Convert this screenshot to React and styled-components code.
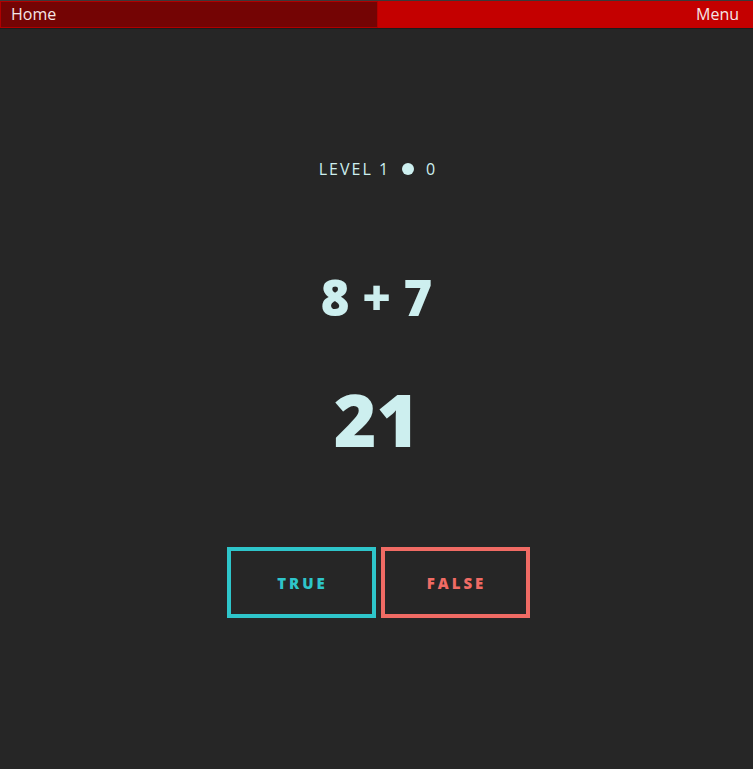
import styled, { createGlobalStyle } from 'styled-components';

const GlobalStyle = createGlobalStyle`
  html, body {
    margin: 0;
    padding: 0;
    background: #262626;
    font-family: "Open Sans", "Noto Sans", sans-serif;
  }
`;

export default function App() {
    return (
        <>
            <GlobalStyle />
            <Page>
                <TopBar>
                    <HomeLink>Home</HomeLink>
                    <MenuLink>Menu</MenuLink>
                </TopBar>
                <Game>
                    <Status>
                        <span>LEVEL 1</span>
                        <Dot />
                        <span>0</span>
                    </Status>
                    <Question>8 + 7</Question>
                    <Answer>21</Answer>
                    <Buttons>
                        <Choice color="#2ec5ca">TRUE</Choice>
                        <Choice color="#f06b64">FALSE</Choice>
                    </Buttons>
                </Game>
            </Page>
        </>
    );
}

const Page = styled.div`
min-height: 769px;
box-sizing: border-box;
border-top: 1px solid #3a3a3a;
`;

const TopBar = styled.header`
display: flex;
height: 27px;
background: #c40000;
border-bottom: 1px solid #1c1c1c;
font-size: 16px;
color: #f4e6e6;
`;

const HomeLink = styled.a`
width: 378px;
box-sizing: border-box;
background: #740404;
border: 1px solid #b00000;
padding: 0 10px;
line-height: 25px;
`;

const MenuLink = styled.a`
margin-left: auto;
padding: 0 14px;
line-height: 27px;
`;

const Game = styled.main`
display: flex;
flex-direction: column;
align-items: center;
color: #cdefef;
padding-top: 130px;
`;

const Status = styled.div`
display: flex;
align-items: center;
gap: 12px;
font-size: 16px;
letter-spacing: 2px;
height: 20px;
padding-left: 3px;
`;

const Dot = styled.span`
width: 12px;
height: 12px;
border-radius: 50%;
background: #cdefef;
`;

const Question = styled.div`
margin-top: 82px;
font-size: 49px;
font-weight: 800;
line-height: 72px;
`;

const Answer = styled.div`
margin-top: 36px;
font-size: 73px;
font-weight: 800;
line-height: 100px;
`;

const Buttons = styled.div`
display: flex;
gap: 5px;
margin-top: 78px;
padding-left: 3px;
`;

const Choice = styled.button`
width: 149px;
height: 71px;
box-sizing: border-box;
background: transparent;
border: 4px solid ${(p) => p.color};
color: ${(p) => p.color};
font-family: "Open Sans", sans-serif;
font-weight: 800;
font-size: 15px;
letter-spacing: 3px;
padding: 0 0 0 3px;
cursor: pointer;
`;
